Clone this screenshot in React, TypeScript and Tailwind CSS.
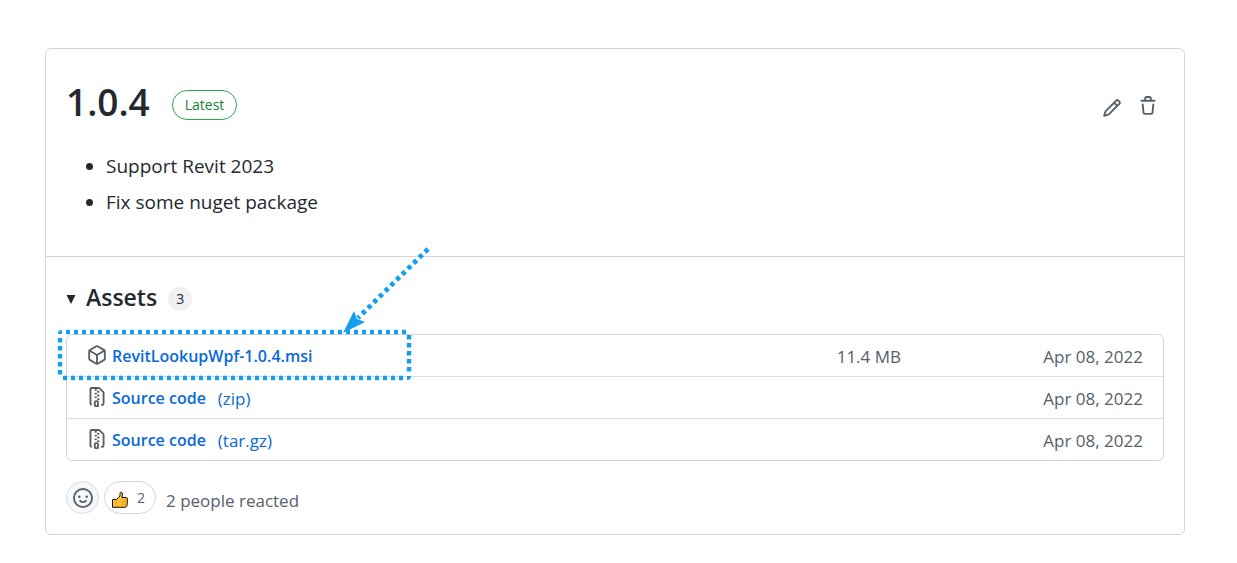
import type { ReactNode } from "react";

type IconProps = { d: string; className?: string };

function Icon({ d, className = "size-5" }: IconProps) {
  return (
    <svg viewBox="0 0 16 16" className={`shrink-0 fill-current ${className}`} aria-hidden="true">
      <path fillRule="evenodd" d={d} />
    </svg>
  );
}

const icons = {
  pencil:
    "M11.013 1.427a1.75 1.75 0 012.474 0l1.086 1.086a1.75 1.75 0 010 2.474l-8.61 8.61c-.21.21-.47.364-.756.445l-3.251.93a.75.75 0 01-.927-.928l.929-3.25a1.75 1.75 0 01.445-.758l8.61-8.61zm1.414 1.06a.25.25 0 00-.354 0L10.811 3.75l1.439 1.44 1.263-1.263a.25.25 0 000-.354l-1.086-1.086zM11.189 6.25L9.75 4.81l-6.286 6.287a.25.25 0 00-.064.108l-.558 1.953 1.953-.558a.249.249 0 00.108-.064l6.286-6.286z",
  trash:
    "M6.5 1.75a.25.25 0 01.25-.25h2.5a.25.25 0 01.25.25V3h-3V1.75zm4.5 0V3h2.25a.75.75 0 010 1.5H2.75a.75.75 0 010-1.5H5V1.75C5 .784 5.784 0 6.75 0h2.5C10.216 0 11 .784 11 1.75zM4.496 6.675a.75.75 0 10-1.492.15l.66 6.6A1.75 1.75 0 005.405 15h5.19c.9 0 1.652-.681 1.741-1.576l.66-6.6a.75.75 0 00-1.492-.149l-.66 6.6a.25.25 0 01-.249.225h-5.19a.25.25 0 01-.249-.225l-.66-6.6z",
  box: "M8.878.392a1.75 1.75 0 00-1.756 0l-5.25 3.045A1.75 1.75 0 001 4.951v6.098c0 .624.332 1.2.872 1.514l5.25 3.045a1.75 1.75 0 001.756 0l5.25-3.045c.54-.313.872-.89.872-1.514V4.951c0-.624-.332-1.2-.872-1.514L8.878.392zM7.875 1.69a.25.25 0 01.25 0l4.63 2.685L8 7.133 3.245 4.375l4.63-2.685zM2.5 5.677v5.372c0 .09.047.171.125.216l4.625 2.683V8.432L2.5 5.677zm6.25 8.271l4.625-2.683a.25.25 0 00.125-.216V5.677L8.75 8.432v5.516z",
  zip: "M3.5 1.75a.25.25 0 01.25-.25h3a.75.75 0 000 1.5h.5a.75.75 0 000-1.5h2.086a.25.25 0 01.177.073l2.914 2.914a.25.25 0 01.073.177v8.586a.25.25 0 01-.25.25h-.5a.75.75 0 000 1.5h.5A1.75 1.75 0 0014 13.25V4.664c0-.464-.184-.909-.513-1.237L10.573.513A1.75 1.75 0 009.336 0H3.75A1.75 1.75 0 002 1.75v11.5c0 .649.353 1.214.874 1.515a.75.75 0 10.752-1.298.25.25 0 01-.126-.217V1.75zM8.75 3a.75.75 0 000 1.5h.5a.75.75 0 000-1.5h-.5zM6 5.25a.75.75 0 01.75-.75h.5a.75.75 0 010 1.5h-.5A.75.75 0 016 5.25zm2 1.5A.75.75 0 018.75 6h.5a.75.75 0 010 1.5h-.5A.75.75 0 018 6.75zm-1.25.75a.75.75 0 000 1.5h.5a.75.75 0 000-1.5h-.5zM8 9.75A.75.75 0 018.75 9h.5a.75.75 0 010 1.5h-.5A.75.75 0 018 9.75zm-.75.75a1.75 1.75 0 00-1.75 1.75v3c0 .414.336.75.75.75h2.5a.75.75 0 00.75-.75v-3a1.75 1.75 0 00-1.75-1.75h-.5zM7 12.25a.25.25 0 01.25-.25h.5a.25.25 0 01.25.25v2.25H7v-2.25z",
  smiley:
    "M1.5 8a6.5 6.5 0 1113 0 6.5 6.5 0 01-13 0zM8 0a8 8 0 100 16A8 8 0 008 0zM5 8a1 1 0 100-2 1 1 0 000 2zm7-1a1 1 0 11-2 0 1 1 0 012 0zM5.32 9.636a.75.75 0 011.038.175l.007.009c.103.118.22.222.35.31.264.178.683.37 1.285.37.602 0 1.02-.192 1.285-.371.13-.088.247-.192.35-.31l.007-.008a.75.75 0 111.222.87c-.06.085-.126.165-.203.241-.16.166-.338.316-.53.445-.63.418-1.37.638-2.127.629-.946 0-1.652-.308-2.126-.63a3.32 3.32 0 01-.715-.657l-.022-.031a.75.75 0 01.184-1.044z",
};

type Asset = { icon: string; name: string; format?: string; size?: string; date: string };

const assets: Asset[] = [
  { icon: icons.box, name: "RevitLookupWpf-1.0.4.msi", size: "11.4 MB", date: "Apr 08, 2022" },
  { icon: icons.zip, name: "Source code", format: "(zip)", date: "Apr 08, 2022" },
  { icon: icons.zip, name: "Source code", format: "(tar.gz)", date: "Apr 08, 2022" },
];

function IconButton({ label, children }: { label: string; children: ReactNode }) {
  return (
    <button type="button" aria-label={label} className="flex size-9 items-center justify-center text-[#57606a]">
      {children}
    </button>
  );
}

function ThumbsUp() {
  return (
    <svg viewBox="0 0 18 18" className="mt-1 size-[18px]" aria-hidden="true">
      <path
        d="M1.5 8.5h4L9 5V2.2Q9.2 1 10.3 1.2C12 1.7 11.7 4 11 6.5h4.3q1.3.2 1.1 1.6l-.3 6q-.3 2-2.1 2.2H1.5Z"
        fill="#ffc02e"
        stroke="#16120c"
        strokeWidth="1"
      />
      <path d="M5.5 9.5V15.5" fill="none" stroke="#e8961e" strokeWidth=".8" />
      <path d="M11 9h4.5M11 11.2h4.5M11 13.4h4" stroke="#e8961e" strokeWidth=".8" />
    </svg>
  );
}

/* Dotted frame and arrow pointing at the installer download. */
function Callout() {
  return (
    <svg
      viewBox="0 0 380 144"
      className="pointer-events-none absolute -top-[94px] -left-[13px] h-36 w-[380px]"
      fill="none"
      stroke="#139ff0"
      aria-hidden="true"
    >
      <g strokeWidth="4.4">
        <path d="M12 91H353" strokeDasharray="4 4" />
        <path d="M355 94V132" strokeDasharray="4.4 3.6" />
        <path d="M9 137H350" strokeDasharray="4 4" />
        <path d="M6 97V136" strokeDasharray="4.4 3.6" />
      </g>
      <path d="M4 93Q4 89 8 89V93ZM353 135H357Q357 139 353 139Z" fill="#139ff0" stroke="none" />
      <path d="M374 8L304 77" strokeWidth="4.8" strokeDasharray="4.2 3.8" />
      <path d="M289 92L300 70L303 78L311 81Z" fill="#139ff0" stroke="none" />
    </svg>
  );
}

export default function App() {
  return (
    <main className="min-h-screen bg-white pt-12 pr-[52px] pb-7 pl-[45px] font-['Open_Sans','Noto_Sans',sans-serif] text-[#24292f]">
      <article className="rounded-md border border-[#d0d7de]">
        <section className="border-b border-[#d0d7de] px-5 pt-7 pb-9">
          <header className="flex items-center">
            <h1 className="text-[37px] leading-[50px] font-semibold">1.0.4</h1>
            <span className="mt-[6px] ml-[22px] rounded-full border border-[#2da44e] px-3 text-sm leading-7 text-[#1a7f37]">
              Latest
            </span>
            <div className="mt-2 -mr-[2px] ml-auto flex">
              <IconButton label="Edit">
                <Icon d={icons.pencil} className="mt-1 size-5" />
              </IconButton>
              <IconButton label="Delete">
                <Icon d={icons.trash} />
              </IconButton>
            </div>
          </header>
          <ul className="mt-[21px] list-disc pl-10 text-[19px] leading-9">
            <li>Support Revit 2023</li>
            <li>Fix some nuget package</li>
          </ul>
        </section>

        <section className="px-5 pt-5 pb-5">
          <details open>
            <summary className="flex cursor-pointer list-none items-center">
              <svg viewBox="0 0 10 10" className="mt-1 size-[10px] fill-current" aria-hidden="true">
                <path d="M.5 1H9.5L5 10Z" />
              </svg>
              <h2 className="ml-[10px] text-[23px] leading-10 font-semibold">Assets</h2>
              <span className="mt-1 ml-[11px] rounded-full bg-[#eff1f3] px-2 text-sm leading-6">3</span>
            </summary>
            <div className="relative mt-[17px] rounded-md border border-[#d0d7de]">
              <table className="w-full text-left text-[17px] text-[#57606a]">
                <tbody className="divide-y divide-[#d8dee4]">
                  {assets.map((asset) => (
                    <tr key={asset.name + asset.format}>
                      <td className="pl-5">
                        <div className="flex items-center">
                          <Icon d={asset.icon} className="mb-[2px] size-5" />
                          <a
                            href="#download"
                            className="ml-[5px] flex items-center gap-3 pt-[2px] leading-[39px] text-[#0969da]"
                          >
                            <span className="text-base leading-[39px] font-semibold">{asset.name}</span>
                            {asset.format && <span>{asset.format}</span>}
                          </a>
                        </div>
                      </td>
                      <td className="pt-[2px] text-right leading-[39px]">{asset.size}</td>
                      <td className="w-[262px] pt-[2px] pr-5 text-right leading-[39px]">{asset.date}</td>
                    </tr>
                  ))}
                </tbody>
              </table>
              <Callout />
            </div>
          </details>

          <footer className="mt-5 flex items-center text-[#57606a]">
            <button
              type="button"
              aria-label="Add reaction"
              className="flex size-[33px] items-center justify-center rounded-full border border-[#d8dee4] bg-[#f6f8fa]"
            >
              <Icon d={icons.smiley} />
            </button>
            <button
              type="button"
              aria-label="Thumbs up, 2 reactions"
              className="ml-[5px] flex h-[33px] items-center gap-2 rounded-full border border-[#d0d7de] px-[6px] pr-[10px] text-sm"
            >
              <ThumbsUp />
              <span>2</span>
            </button>
            <span className="mt-[6px] ml-[10px] text-[17px]">2 people reacted</span>
          </footer>
        </section>
      </article>
    </main>
  );
}
